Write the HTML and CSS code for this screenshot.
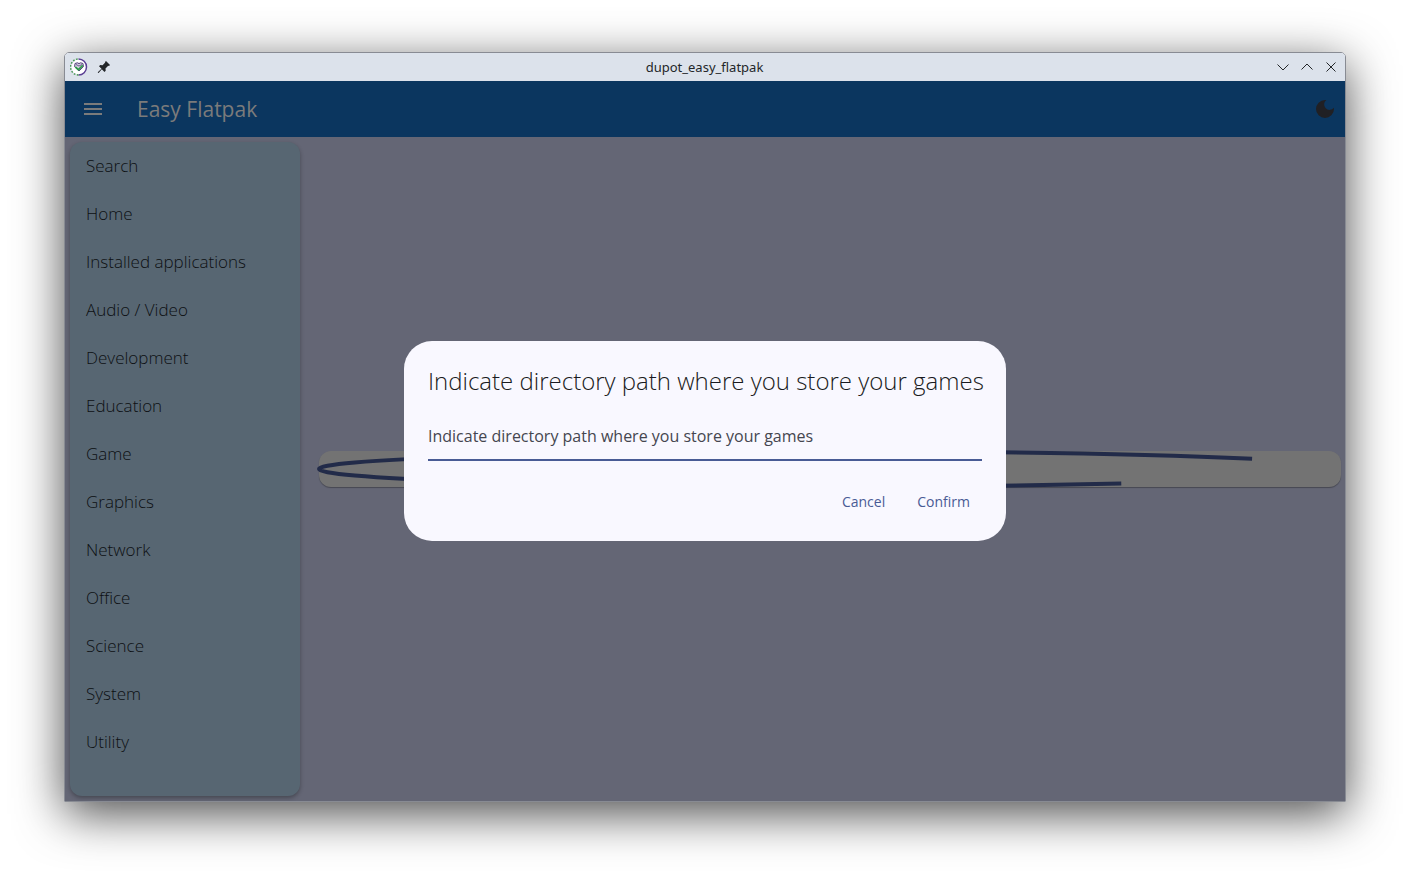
FILE: index.html
```html
<!DOCTYPE html>
<html lang="en">
<head>
<meta charset="utf-8">
<title>dupot_easy_flatpak</title>
<link rel="stylesheet" href="styles.css">
</head>
<body>
<div class="window">
  <header class="titlebar">
    <div class="titlebar-side">
      <svg class="app-logo" viewBox="0 0 18 18" aria-hidden="true">
        <circle cx="9" cy="9" r="7.600" fill="#fff"/>
        <path d="M8.500 1a8 8 0 0 1 0 16" fill="none" stroke="#5b3f94" stroke-width="1.500"/>
        <path d="M8.500 17A8 8 0 0 1 8.500 1" fill="none" stroke="#4d9a58" stroke-width="1.500" stroke-dasharray="1.700 1.500"/>
        <path d="M5 5.500l2.400-.7L9 5.600l1.600-.8 2.400.7.400 3.200L9 13 4.600 8.700z" fill="#d5cfe0" stroke="#54407c" stroke-width="1"/>
        <path d="M6 6.500l3 1.500 3-1.500" fill="none" stroke="#54407c" stroke-width=".8"/>
        <path d="M5.300 8.800l3.100 2.900L12.800 7.300" fill="none" stroke="#2f9a4c" stroke-width="1.700"/>
      </svg>
      <button class="title-button" aria-label="Keep above">
        <svg viewBox="0 0 16 16" fill="#232629"><path d="M10 2l4 4-1 1-.8-.2-2.700 2.700.2 2.300-1.200 1.200-2.700-2.700L2.600 14l-.8-.2.200-.8 3.500-3.300L3 7.200 4.200 6l2.400.2 2.600-2.700L9 3z"/></svg>
      </button>
    </div>
    <h1 class="window-title">dupot_easy_flatpak</h1>
    <div class="titlebar-side titlebar-end">
      <button class="title-button" aria-label="Minimize"><svg viewBox="0 0 16 16"><path class="line" d="M2.500 5.500L8 11l5.500-5.500"/></svg></button>
      <button class="title-button" aria-label="Maximize"><svg viewBox="0 0 16 16"><path class="line" d="M2.500 10.500L8 5l5.500 5.500"/></svg></button>
      <button class="title-button" aria-label="Close"><svg viewBox="0 0 16 16"><path class="line" d="M3.500 3.500l9 9m0-9l-9 9"/></svg></button>
    </div>
  </header>
  <div class="app">
    <div class="appbar">
      <button class="bar-button" aria-label="Menu"><svg viewBox="0 0 24 24" fill="#7b7b7b"><path d="M3 18h18v-2H3v2zm0-5h18v-2H3v2zm0-7v2h18V6H3z"/></svg></button>
      <h2 class="app-title">Easy Flatpak</h2>
      <button class="bar-button" aria-label="Dark mode"><svg viewBox="0 0 24 24" fill="#202024"><path d="M12 3a9 9 0 1 0 9 9c0-.46-.04-.92-.1-1.360A5.400 5.400 0 1 1 13.360 3.100C12.920 3.040 12.460 3 12 3z"/></svg></button>
    </div>
    <div class="content">
      <nav class="sidebar">
        <a href="#">Search</a>
        <a href="#">Home</a>
        <a href="#">Installed applications</a>
        <a href="#">Audio / Video</a>
        <a href="#">Development</a>
        <a href="#">Education</a>
        <a href="#">Game</a>
        <a href="#">Graphics</a>
        <a href="#">Network</a>
        <a href="#">Office</a>
        <a href="#">Science</a>
        <a href="#">System</a>
        <a href="#">Utility</a>
      </nav>
      <main class="main">
        <div class="loading-card">
          <svg class="loader" viewBox="0 0 1000 36" preserveAspectRatio="none" aria-label="Loading"><path d="M913 7.800A500 17.500 0 0 0 500 .5A500 17.500 0 0 0 0 18A500 17.500 0 0 0 500 35.500A500 17.500 0 0 0 785 32.600"/></svg>
        </div>
      </main>
    </div>
    <div class="dialog-layer">
      <form class="dialog" role="dialog" aria-labelledby="dialog-title">
        <h2 class="dialog-title" id="dialog-title">Indicate directory path where you store your games</h2>
        <input class="path-field" type="text" aria-labelledby="dialog-title" placeholder="Indicate directory path where you store your games">
        <div class="dialog-actions">
          <button type="button" class="text-button">Cancel</button>
          <button type="button" class="text-button">Confirm</button>
        </div>
      </form>
    </div>
  </div>
</div>
</body>
</html>
```
FILE: styles.css
```css
* {
  box-sizing: border-box;
}

body {
  margin: 0;
  min-height: 100vh;
  padding: 52px 64px 76px;
  display: flex;
  background: #fff;
  font-family: "Open Sans", "Noto Sans", sans-serif;
}

button {
  border: 0;
  background: none;
  padding: 0;
  font: inherit;
}

svg {
  display: block;
}

.window {
  flex: 1;
  display: flex;
  flex-direction: column;
  border: 1px solid #888b93;
  border-radius: 5px 5px 0 0;
  box-shadow: 0 12px 48px rgba(0, 0, 0, 0.7);
  overflow: hidden;
}

.titlebar {
  height: 28px;
  padding: 0 6px 0 5px;
  display: flex;
  align-items: center;
  background: #dce2eb;
}

.titlebar-side {
  flex: 1;
  display: flex;
  align-items: center;
  gap: 8px;
}

.titlebar-end {
  justify-content: flex-end;
}

.app-logo {
  width: 18px;
  height: 18px;
}

.title-button,
.title-button svg {
  width: 16px;
  height: 16px;
}

.line {
  fill: none;
  stroke: #232629;
  stroke-width: 1;
}

.window-title {
  margin: 0;
  font: 400 13px/18px "Noto Sans", sans-serif;
  color: #232629;
}

.app {
  position: relative;
  flex: 1;
  display: flex;
  flex-direction: column;
  background: #646675;
}

.appbar {
  height: 56px;
  padding: 0 8px 0 16px;
  display: flex;
  align-items: center;
  background: #0b365f;
}

.bar-button svg {
  width: 24px;
  height: 24px;
}

.app-title {
  flex: 1;
  margin: 0 0 0 32px;
  font-size: 21px;
  font-weight: 400;
  line-height: 28px;
  color: #7b7b7b;
}

.content {
  flex: 1;
  display: flex;
  gap: 19px;
  padding: 5px 4px 5px 5px;
}

.sidebar {
  width: 230px;
  border-radius: 12px;
  background: #576672;
  box-shadow: 0 2px 4px rgba(0, 0, 0, 0.3);
}

.sidebar a {
  display: block;
  padding: 0 16px;
  font-size: 17px;
  font-weight: 300;
  line-height: 48px;
  color: #0d1013;
  text-decoration: none;
}

.main {
  flex: 1;
  display: flex;
  flex-direction: column;
  justify-content: center;
}

.loading-card {
  height: 36px;
  border-radius: 12px;
  background: #737373;
  box-shadow: 0 1px 1px rgba(0, 0, 0, 0.3);
}

.loader {
  width: 100%;
  height: 100%;
  overflow: visible;
}

.loader path {
  fill: none;
  stroke: #222b49;
  stroke-width: 4;
  vector-effect: non-scaling-stroke;
}

.dialog-layer {
  position: absolute;
  inset: 0;
  display: flex;
  align-items: center;
  justify-content: center;
}

.dialog {
  width: 602px;
  padding: 24px 24px 20px;
  border-radius: 28px;
  background: #f9f8ff;
}

.dialog-title {
  margin: 0 0 16px;
  font-size: 24px;
  font-weight: 300;
  line-height: 32px;
  white-space: nowrap;
  color: #1a1b21;
}

.path-field {
  display: block;
  width: 100%;
  height: 48px;
  padding: 0;
  border: 0;
  border-bottom: 2px solid #495b95;
  background: none;
  font: 400 16px/24px "Open Sans", "Noto Sans", sans-serif;
  color: #1a1b21;
  outline: 0;
}

.path-field::placeholder {
  color: #45464f;
  opacity: 1;
}

.dialog-actions {
  display: flex;
  justify-content: flex-end;
  gap: 8px;
  margin-top: 20px;
}

.text-button {
  height: 40px;
  padding: 0 12px;
  font-size: 14px;
  color: #495b95;
}
```
